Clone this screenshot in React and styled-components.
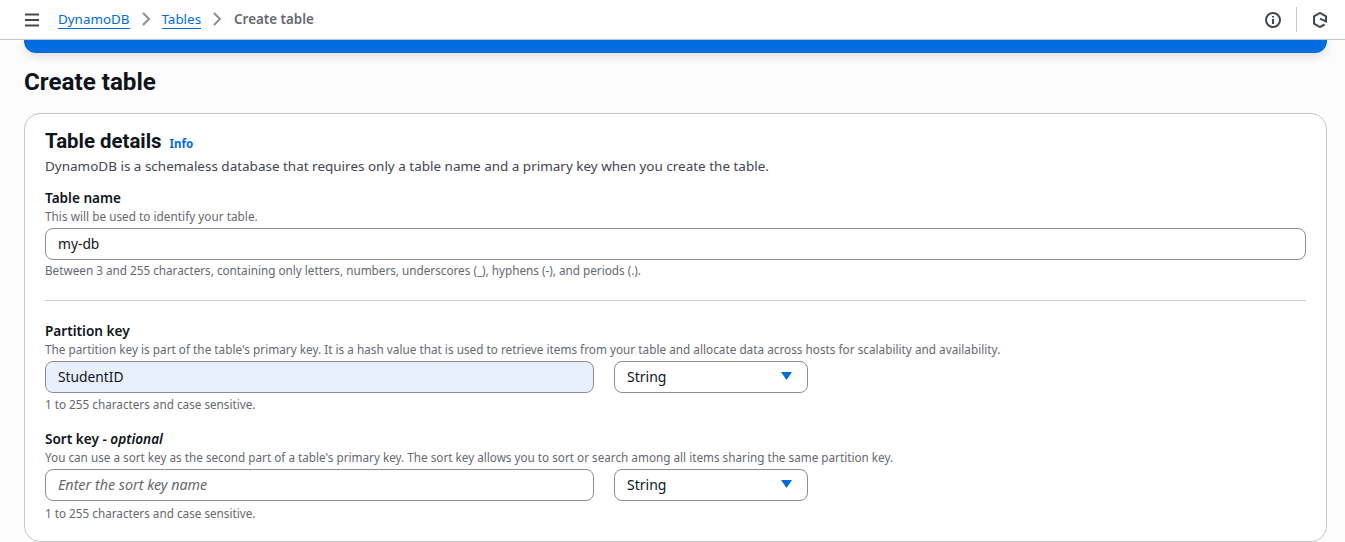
import React from "react";
import styled, { createGlobalStyle } from "styled-components";

const GlobalStyle = createGlobalStyle`
  html, body {
    margin: 0;
    padding: 0;
    background: #fcfcfc;
    font-family: "Noto Sans", "Open Sans", sans-serif;
    overflow: hidden;
  }
`;

const Page = styled.div`
  width: 1345px;
  height: 542px;
  overflow: hidden;
  display: flex;
  flex-direction: column;
`;

const TopBar = styled.header`
  height: 39px;
  flex-shrink: 0;
  background: #fff;
  border-bottom: 1px solid #c6c6cd;
  display: flex;
  align-items: center;
  padding: 0 24px;
  color: #424650;
`;

const Crumbs = styled.nav`
  display: flex;
  align-items: center;
  margin-left: 18px;
  margin-top: -1px;
  font-size: 13.4px;
  line-height: 20px;
`;

const CrumbLink = styled.a`
  color: #006ce0;
  border-bottom: 1px solid #006ce0;
  line-height: 18px;
`;

const CrumbCurrent = styled.span`
  color: #656871;
  font-weight: 600;
  margin-left: 1px;
`;

const Chevron = styled.svg`
  width: 16px;
  height: 16px;
  margin: 0 8px;
  color: #8c8c94;
`;

const TopActions = styled.div`
  margin-left: auto;
  display: flex;
  align-items: center;
  margin-right: -7px;
`;

const ActionDivider = styled.span`
  width: 1px;
  height: 25px;
  background: #c6c6cd;
  margin: 0 15px;
`;

const Content = styled.main`
  padding: 0 18px 0 24px;
  display: flex;
  flex-direction: column;
  flex: 1;
`;

const Banner = styled.div`
  height: 13px;
  flex-shrink: 0;
  background: #006ce0;
  border-radius: 0 0 12px 12px;
  box-shadow: 0 4px 10px rgba(0, 7, 22, 0.12);
`;

const Title = styled.h1`
  margin: 14px 0 16px;
  font-family: Roboto, sans-serif;
  font-size: 24.2px;
  line-height: 30px;
  font-weight: 700;
  color: #0f141a;
`;

const Card = styled.section`
  flex: 1;
  background: #fff;
  border: 1px solid #c6c6cd;
  border-radius: 16px;
  padding: 15px 20px 0;
`;

const CardHeading = styled.div`
  display: flex;
  align-items: baseline;
  gap: 8px;
`;

const CardTitle = styled.h2`
  margin: 0;
  font-family: Roboto, sans-serif;
  font-size: 20.4px;
  line-height: 24px;
  font-weight: 700;
  color: #0f141a;
`;

const InfoLink = styled.a`
  font-size: 11.5px;
  font-weight: 700;
  color: #006ce0;
`;

const CardText = styled.p`
  margin: 3px 0 0;
  font-size: 13.47px;
  line-height: 20px;
  color: #424650;
`;

const Field = styled.div`
  margin-top: ${(p) => p.$top || 0}px;
`;

const Label = styled.div`
  font-size: 13.6px;
  line-height: 18px;
  font-weight: 600;
  color: #0f141a;

  em {
    font-style: italic;
  }
`;

const Hint = styled.div`
  font-size: 11.72px;
  line-height: 16px;
  color: #656871;
  margin-top: ${(p) => p.$top || 0}px;
  letter-spacing: ${(p) => p.$spacing || 0}px;
`;

const InputRow = styled.div`
  display: flex;
  gap: 20px;
  margin-top: 4px;
`;

const Input = styled.div`
  box-sizing: border-box;
  height: 32px;
  width: ${(p) => p.$width || "100%"};
  flex-shrink: 0;
  display: flex;
  align-items: center;
  padding: 0 12px 2px;
  border: 1px solid #8c8c94;
  border-radius: 8px;
  font-size: 13.8px;
  color: #0f141a;
  background: ${(p) => (p.$autofilled ? "#e8f0fe" : "#fff")};
`;

const Placeholder = styled.span`
  font-size: 14.3px;
  font-style: italic;
  color: #656871;
`;

const Select = styled.div`
  box-sizing: border-box;
  width: 194px;
  height: 32px;
  display: flex;
  align-items: center;
  justify-content: space-between;
  padding: 0 15px 2px 12px;
  border: 1px solid #8c8c94;
  border-radius: 8px;
  font-size: 14px;
  color: #0f141a;
  background: #fff;
`;

const Caret = styled.svg`
  width: 11px;
  height: 8px;
  color: #006ce0;
`;

const Divider = styled.hr`
  margin: 22px 0 21px;
  border: 0;
  border-top: 1px solid #c6c6cd;
`;

const ChevronIcon = () => (
  <Chevron viewBox="0 0 16 16" fill="none" stroke="currentColor" strokeWidth="2">
    <path d="M5 2l6 6-6 6" />
  </Chevron>
);

const KeyType = () => (
  <Select>
    String
    <Caret viewBox="0 0 11 8">
      <path d="M0 0h11L5.5 8z" fill="currentColor" />
    </Caret>
  </Select>
);

const App = () => {
  return (
    <Page>
      <GlobalStyle />
      <TopBar>
        <svg width="16" height="16" viewBox="0 0 16 16" fill="none" stroke="currentColor" strokeWidth="2">
          <path d="M1 2.5h14M1 8h14M1 13.5h14" />
        </svg>
        <Crumbs>
          <CrumbLink>DynamoDB</CrumbLink>
          <ChevronIcon />
          <CrumbLink>Tables</CrumbLink>
          <ChevronIcon />
          <CrumbCurrent>Create table</CrumbCurrent>
        </Crumbs>
        <TopActions>
          <svg width="16" height="16" viewBox="0 0 16 16" fill="none" stroke="currentColor" strokeWidth="2">
            <circle cx="8" cy="8" r="7" />
            <path d="M8 7v5M8 4v1.6" />
          </svg>
          <ActionDivider />
          <svg width="16" height="16" viewBox="0 0 16 16" fill="none" stroke="currentColor" strokeWidth="2">
            <path d="M12.6 12.5L8 15 2 11.6V4.4L8 1l6 3.4v5L8 6.6" />
          </svg>
        </TopActions>
      </TopBar>
      <Content>
        <Banner />
        <Title>Create table</Title>
        <Card>
          <CardHeading>
            <CardTitle>Table details</CardTitle>
            <InfoLink>Info</InfoLink>
          </CardHeading>
          <CardText>
            DynamoDB is a schemaless database that requires only a table name and a primary key when you create the table.
          </CardText>
          <Field $top={13}>
            <Label>Table name</Label>
            <Hint $top={1} $spacing={0.04}>This will be used to identify your table.</Hint>
            <InputRow>
              <Input>my-db</Input>
            </InputRow>
            <Hint $top={2}>
              Between 3 and 255 characters, containing only letters, numbers, underscores (_), hyphens (-), and periods (.).
            </Hint>
          </Field>
          <Divider />
          <Field>
            <Label>Partition key</Label>
            <Hint $top={1} $spacing={0.027}>
              The partition key is part of the table's primary key. It is a hash value that is used to retrieve items from your table and allocate data across hosts for scalability and availability.
            </Hint>
            <InputRow>
              <Input $width="549px" $autofilled>StudentID</Input>
              <KeyType />
            </InputRow>
            <Hint $top={3}>1 to 255 characters and case sensitive.</Hint>
          </Field>
          <Field $top={18}>
            <Label>
              Sort key - <em>optional</em>
            </Label>
            <Hint $top={1}>
              You can use a sort key as the second part of a table's primary key. The sort key allows you to sort or search among all items sharing the same partition key.
            </Hint>
            <InputRow>
              <Input $width="549px">
                <Placeholder>Enter the sort key name</Placeholder>
              </Input>
              <KeyType />
            </InputRow>
            <Hint $top={4}>1 to 255 characters and case sensitive.</Hint>
          </Field>
        </Card>
      </Content>
    </Page>
  );
};

export default App;
